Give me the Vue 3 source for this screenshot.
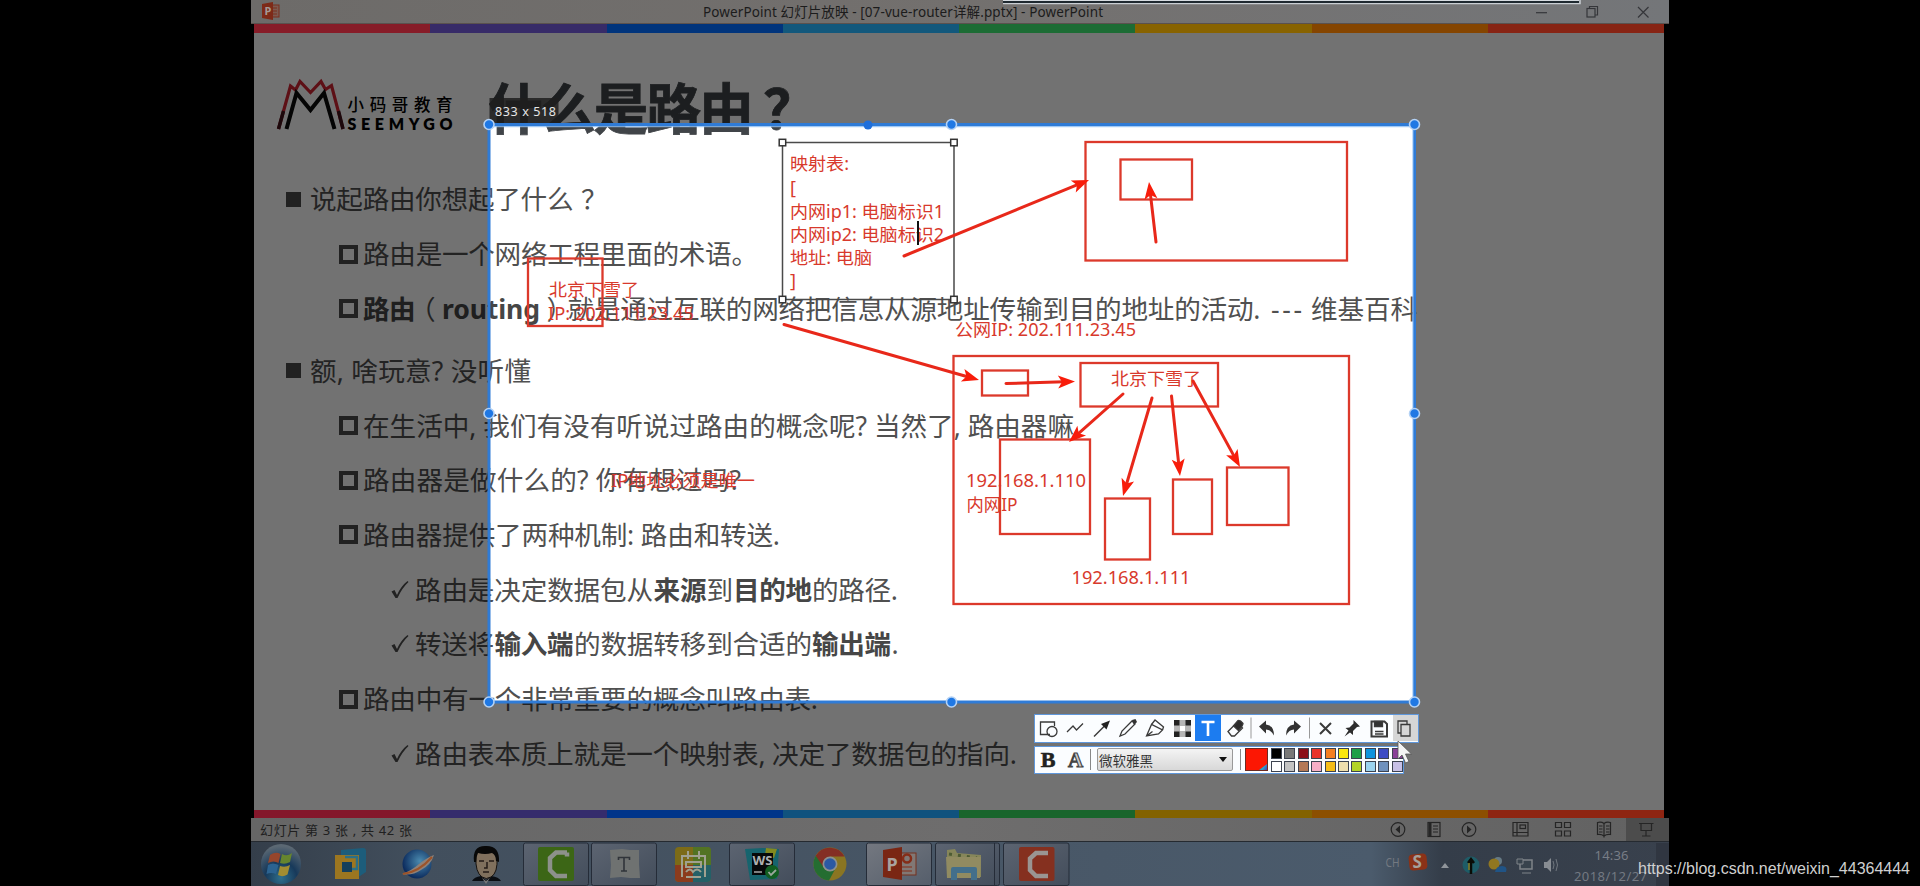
<script setup>
const topStripe = ['#871c28', '#372b68', '#00347c', '#12587c', '#1c6c34', '#886300', '#854500', '#872414']
const bottomStripe = ['#84172b', '#352c6c', '#00358a', '#10527e', '#19652c', '#836200', '#8c4f00', '#8e2512']

const lines = [
  { level: 1, parts: [{ t: '说起路由你想起了什么', x: 310, w: 263.5 }, { t: '？', x: 581, w: 26 }] },
  { level: 2, parts: [{ t: '路由是一个网络工程里面的术语。', x: 363, w: 395 }] },
  {
    level: 2,
    parts: [
      { t: '路由', x: 363, w: 52.5, b: true },
      { t: '（', x: 409, w: 26 },
      { t: 'routing', x: 442, w: 98, b: true },
      { t: '）', x: 546.5, w: 26 },
      { t: '就是通过互联的网络把信息从源地址传输到目的地址的活动.', x: 567.5, w: 693 },
      { t: '---', x: 1271, w: 31 },
      { t: '维基百科', x: 1311, w: 106 }
    ]
  },
  { level: 1, gap: true, parts: [{ t: '额, 啥玩意? 没听懂', x: 310, w: 221 }] },
  { level: 2, parts: [{ t: '在生活中, 我们有没有听说过路由的概念呢? 当然了, 路由器嘛', x: 363, w: 711 }] },
  { level: 2, parts: [{ t: '路由器是做什么的? 你有想过吗?', x: 363, w: 378 }] },
  { level: 2, parts: [{ t: '路由器提供了两种机制: 路由和转送.', x: 363, w: 417 }] },
  {
    level: 3,
    parts: [
      { t: '路由是决定数据包从', x: 415, w: 238 },
      { t: '来源', x: 653.5, w: 53, b: true },
      { t: '到', x: 706.5, w: 26.5 },
      { t: '目的地', x: 733, w: 79, b: true },
      { t: '的路径.', x: 812, w: 86 }
    ]
  },
  {
    level: 3,
    parts: [
      { t: '转送将', x: 415, w: 79 },
      { t: '输入端', x: 494.5, w: 79, b: true },
      { t: '的数据转移到合适的', x: 574, w: 238 },
      { t: '输出端', x: 812, w: 79, b: true },
      { t: '.', x: 891.5, w: 6 }
    ]
  },
  { level: 2, parts: [{ t: '路由中有一个非常重要的概念叫路由表.', x: 363, w: 455 }] },
  { level: 3, parts: [{ t: '路由表本质上就是一个映射表, 决定了数据包的指向.', x: 415, w: 602 }] }
]

const rects = [
  [1085.5, 142, 261.5, 118.5],
  [1120.5, 159.5, 71.5, 40],
  [528, 258.5, 74.5, 67.5],
  [953.5, 356, 395.5, 248],
  [982, 370.5, 46, 25],
  [1080.5, 363, 137.5, 43.5],
  [1000, 439.5, 90, 94.5],
  [1105, 498.5, 45, 61],
  [1173, 479.5, 39, 54.5],
  [1227, 467.5, 61.5, 57.5]
]

const arrows = [
  [904, 256, 1089, 180],
  [1156, 242, 1149, 182],
  [784, 324.5, 979, 380],
  [1006, 383.5, 1075, 381.5],
  [1123, 394, 1069, 442],
  [1152, 398, 1123, 496],
  [1171.5, 396, 1180, 476],
  [1193, 381, 1240, 467]
]
const shaft = ([x1, y1, x2, y2]) => {
  const d = Math.hypot(x2 - x1, y2 - y1)
  const k = (d - 11) / d
  return { x1, y1, x2: x1 + (x2 - x1) * k, y2: y1 + (y2 - y1) * k }
}
const head = ([x1, y1, x2, y2]) =>
  `translate(${x2} ${y2}) rotate(${(Math.atan2(y2 - y1, x2 - x1) * 180) / Math.PI})`

const notes = [
  ['映射表:', 790, 169.5, 59],
  ['[', 790, 194, 6],
  ['内网ip1: 电脑标识1', 790, 217.5, 154],
  ['内网ip2: 电脑标识2', 790, 240.5, 154],
  ['地址: 电脑', 790, 264, 82],
  [']', 790, 287, 6],
  ['北京下雪了', 549, 296, 90],
  ['IP: 202.111.23.45', 548, 320, 146],
  ['IP地址必须是唯一', 611, 486.5, 144],
  ['公网IP: 202.111.23.45', 955, 336, 181],
  ['北京下雪了', 1111, 385, 90],
  ['192.168.1.110', 966, 486.5, 120],
  ['内网IP', 966.5, 511, 51],
  ['192.168.1.111', 1071.5, 584, 119]
]

const handles = [
  [489, 124.5], [951.5, 124.5], [1414.5, 124.5],
  [489, 413.5], [1414.5, 413.5],
  [489, 702], [951.5, 702], [1414.5, 702]
]

const swatches = [
  '#000000', '#787878', '#8b0f18', '#e8332b', '#f57f22', '#fbe80f', '#1f9f48', '#0f93dd', '#3c4bc4', '#8a4098',
  '#ffffff', '#c3c3c3', '#b57956', '#f7aec6', '#f6bd18', '#efdfae', '#b3d428', '#9bd3ee', '#6f91bd', '#c7c0e6'
]
</script>

<template>
  <div class="stage">
    <div class="screen">
      <header class="titlebar">
        <svg class="ppt-small" width="18" height="18" viewBox="0 0 18 18">
          <rect x="8" y="3" width="9" height="12" fill="#7c5a50" stroke="#7a2e1c" />
          <path d="M11 6h4M11 9h4M11 12h4" stroke="#7a2e1c" />
          <path d="M0 2l11-2v18L0 16z" fill="#7d2a18" />
          <text x="2.5" y="13" font-size="11" font-weight="700" fill="#a59a96">P</text>
        </svg>
        <svg class="caption" width="404" height="24">
          <text x="1" y="17" textLength="400">PowerPoint 幻灯片放映 - [07-vue-router详解.pptx] - PowerPoint</text>
        </svg>
        <svg class="controls" width="120" height="24" viewBox="0 0 120 24" fill="none" stroke="#35363a" stroke-width="1.2">
          <path d="M1 12.700h11" />
          <rect x="52" y="8.500" width="8" height="8.500" />
          <path d="M54.500 8.500v-2h8v8.500h-2.500" />
          <path d="M103 7l10.500 10.500M113.500 7L103 17.500" />
        </svg>
      </header>

      <main class="slide">
        <div class="stripe stripe-top">
          <i v-for="c in topStripe" :key="c" :style="{ background: c }"></i>
        </div>
        <section class="body">
          <div class="head">
            <svg class="logo" width="190" height="64" viewBox="270 70 190 64">
              <g fill="none" stroke-linejoin="miter">
                <path d="M279.500 129L291.500 86l5 4 4.500-8.500 10.500 11 10.500-11 4.500 8 6-4L344 129" stroke="#d02433" stroke-width="3.200" />
                <path d="M279.500 129l5-18M344 129l-4.500-18" stroke="#40121a" stroke-width="3.500" />
                <path d="M287.500 129l10-36 14 17 13.500-17 10.500 36" stroke="#0a0a0a" stroke-width="4" />
              </g>
              <text x="348.500" y="110.500" font-size="16.500" font-weight="500" textLength="105">小码哥教育</text>
              <text x="348.500" y="129.500" font-size="16" font-weight="800" textLength="105" class="brand">SEEMYGO</text>
            </svg>
            <svg class="title" width="340" height="75">
              <text x="-1" y="51" textLength="266">什么是路由</text>
              <text x="274" y="51">？</text>
            </svg>
          </div>
          <div class="lines">
            <div v-for="(l, i) in lines" :key="i" class="line" :class="['level' + l.level, { gap: l.gap }]">
              <span v-if="l.level === 1" class="bullet-solid"></span>
              <span v-else-if="l.level === 2" class="bullet-box"></span>
              <svg v-else class="tick" width="20" height="20" viewBox="0 0 20 20">
                <path d="M1.500 11.500l3-1.500 2.500 5Q11 6 17.500 1L18.500 2Q12 8 7.500 18H5.500z" fill="#4c4c4c" />
              </svg>
              <svg class="words" height="54" :width="1130" :viewBox="`${l.parts[0].x} 0 1130 54`">
                <text v-for="p in l.parts" :key="p.x" :x="p.x" y="37" :textLength="p.w" :class="{ strong: p.b }">{{ p.t }}</text>
              </svg>
            </div>
          </div>
          <div class="mask"></div>
        </section>
        <div class="stripe stripe-bottom">
          <i v-for="c in bottomStripe" :key="c" :style="{ background: c }"></i>
        </div>
      </main>

      <footer class="status">
        <svg class="count" width="160" height="24"><text x="0" y="16.500" textLength="152">幻灯片 第 3 张 , 共 42 张</text></svg>
        <svg class="views" width="284" height="25" viewBox="1385 818 284 25" fill="none" stroke="#252525" stroke-width="1.200">
          <rect x="1626" y="818" width="43" height="25" fill="#4c4c4c" stroke="none" />
          <circle cx="1398" cy="829.500" r="6.800" /><path d="M1400 825.500v8l-4.500-4z" fill="#252525" stroke="none" />
          <rect x="1428" y="822.500" width="12" height="14" /><path d="M1430 823v13" stroke-width="3" /><path d="M1433 826h5M1433 829h5M1433 832h5" />
          <circle cx="1469" cy="829.500" r="6.800" /><path d="M1467 825.500v8l4.500-4z" fill="#252525" stroke="none" />
          <path d="M1513 822.500h15v13.500h-15zM1517 822.500v13.500M1513 832.500h15" /><rect x="1520" y="825" width="5.500" height="3.500" />
          <path d="M1555.500 822.500h6v5h-6zM1564.500 822.500h6v5h-6zM1555.500 831h6v5h-6zM1564.500 831h6v5h-6z" />
          <path d="M1597.500 822.500q4-1 6.500 1 2.500-2 6.500-1v12q-4-.5-6.500 1.500-2.500-2-6.500-1.500zM1604 823.500v14" /><path d="M1599 826h3.500M1599 829h3.500M1599 832h3.500M1606 826h3.500M1606 829h3.500M1606 832h3.500" />
          <path d="M1639 823.500h14.500M1641 824v6.500h10.500v-6.500M1646 831v4.500M1642 836h8.500" />
        </svg>
      </footer>

      <nav class="taskbar">
        <svg width="1418" height="44" viewBox="251 842 1418 44">
          <defs>
            <radialGradient id="orb" cx="50%" cy="85%" r="80%"><stop offset="0" stop-color="#2f6f8c" /><stop offset=".5" stop-color="#17395a" /><stop offset="1" stop-color="#5b6873" /></radialGradient>
            <linearGradient id="btn" x1="0" y1="0" x2="1" y2="1"><stop offset="0" stop-color="#5c6471" /><stop offset="1" stop-color="#434d5b" /></linearGradient>
            <linearGradient id="btnOn" x1="0" y1="0" x2="1" y2="1"><stop offset="0" stop-color="#747880" /><stop offset="1" stop-color="#555e6b" /></linearGradient>
            <radialGradient id="ball" cx="60%" cy="40%" r="60%"><stop offset="0" stop-color="#4b8bb0" /><stop offset="1" stop-color="#0c2c5e" /></radialGradient>
          </defs>
          <g stroke="#252c38" fill="url(#btn)">
            <rect x="523.500" y="843" width="65" height="42.500" rx="2" />
            <rect x="591.500" y="843" width="65" height="42.500" rx="2" />
            <rect x="729.500" y="843" width="65" height="42.500" rx="2" />
            <rect x="866.500" y="843" width="65" height="42.500" rx="2" fill="url(#btnOn)" />
            <rect x="935.500" y="843" width="64" height="42.500" rx="2" />
            <path d="M994.500 843v42" />
            <rect x="1003.500" y="843" width="65.500" height="42.500" rx="2" />
          </g>

          <circle cx="281" cy="864" r="20" fill="url(#orb)" />
          <path d="M270 855q6-4 10.500-1l-2 9q-5-3-10.500 0z" fill="#96462c" />
          <path d="M282 854q5 3 10-1l-2 9q-5 3-10 1z" fill="#66852e" />
          <path d="M268 865q5-3 10.500 0l-2.500 9q-5-2-9.500 0z" fill="#2c6390" />
          <path d="M280 866q5 2 10-1l-2.500 9.500q-5 3-9.500.5z" fill="#a38d31" />

          <path d="M341 850l22-2q3 0 3 3v21l-6 4h-19z" fill="#1d5d7b" />
          <path d="M335 855h24v24h-24zM342 862v10h10v-10z" fill="#9c7620" fill-rule="evenodd" />
          <path d="M342 862h10v10h-10z" fill="#153f5b" />
          <path d="M345 857h12v12h-5" fill="none" stroke="#2b7087" stroke-width="2.500" />

          <circle cx="417" cy="864" r="14.500" fill="url(#ball)" />
          <path d="M402 874q9-3 17-10 9-7 15-9-3 10-13 15-9 6-19 4z" fill="#8e8178" /><path d="M403 874q16-2 29-17" stroke="#9c5329" stroke-width="2" fill="none" />

          <path d="M472 881q2-4 9-5l5 4 5-4q8 1 10 5z" fill="#0a0d12" />
          <path d="M476 857q0-9 10-9t11 9q1 16-6 20-5 3-9 0-7-5-6-20z" fill="#80705d" stroke="#16120f" />
          <path d="M474 862q-2-16 11-16 15-1 14 16l-3-1q0-6-4-8-7 2-14 0-2 4-2 9z" fill="#080808" />
          <path d="M479 861h5M489 861h5M487 862v6h-3M483 872h6" stroke="#241b17" stroke-width="1.500" fill="none" />
          <path d="M482 878l4 3 4-3-4 6z" fill="#777" />

          <rect x="538" y="847" width="36" height="34" rx="2" fill="#3c6616" />
          <path d="M567 852.500h-11l-6 5.500v12l6 6h11M567 852.500v4" fill="none" stroke="#8d918b" stroke-width="4.500" />

          <path d="M610 850l12-1 8 1 9 0 0 14 1 14-10 0-9-1-11 1 1-13z" fill="#6f7271" />
          <path d="M618.500 860v-2.500h11v2.500M624 857.500v13.500M621 871h6" fill="none" stroke="#30343a" stroke-width="1.600" />

          <rect x="675" y="847" width="36" height="35" rx="4" fill="#7c6b17" />
          <path d="M693 847h14q4 0 4 4v14h-18z" fill="#527323" /><path d="M693 865h18v13q0 4-4 4h-14z" fill="#246067" /><path d="M675 865h18v17h-14q-4 0-4-4z" fill="#8b3b1c" />
          <g fill="none" stroke="#a0a190" stroke-width="2"><path d="M682 856h23v21M682 855v22M688 851v8M699 851v8M686 862h15v5h-15zM686 872q4-5 7 0 4-5 8 0M686 877h15" /></g>

          <path d="M745 849l18-1 16 1-2 30-27 1z" fill="#16646e" /><path d="M766 848l11 1-3 9-9-3z" fill="#828920" />
          <rect x="752" y="853" width="21" height="22" fill="#07090a" />
          <text x="752.500" y="864.500" font-size="12" font-weight="700" textLength="20" lengthAdjust="spacingAndGlyphs" fill="#aeb1b1">WS</text><path d="M754 872h8" stroke="#a9a9a9" stroke-width="1.500" />
          <circle cx="772" cy="872" r="7" fill="#125e21" /><path d="M768.500 872l2.500 3 5-5" stroke="#9ca89d" stroke-width="1.800" fill="none" />

          <circle cx="830" cy="864" r="16.500" fill="#8a7522" />
          <path d="M830 864L815.700 855.700A16.500 16.500 0 0 0 829 880.500l7-13z" fill="#246d31" />
          <path d="M830 856.500h14.500A16.500 16.500 0 0 0 815.700 855.700l7.500 11z" fill="#842e24" />
          <circle cx="830" cy="864" r="7.500" fill="#8d918f" /><circle cx="830" cy="864" r="5.800" fill="#2b59a3" />

          <rect x="898" y="853" width="18" height="22" fill="#817875" stroke="#74301e" />
          <circle cx="907" cy="858.500" r="4" fill="none" stroke="#852d18" stroke-width="2.500" /><path d="M902 867h10M902 871h10" stroke="#852d18" />
          <path d="M883 850l19-3v33l-19-3z" fill="#7a2613" /><text x="886.500" y="870.500" font-size="18" font-weight="700" fill="#a9a29f">P</text>

          <path d="M947 850l8-1 2 4 24 2v22h-34z" fill="#86865a" /><path d="M949 854l28 4" stroke="#4d5b33" stroke-width="3" stroke-dasharray="3 6" /><path d="M946 857h35l-1 21h-33z" fill="#918b61" />
          <path d="M951 880v-11q0-2 2-2h22q2 0 2 2v11h-6v-7h-14v7z" fill="#436f8b" />

          <rect x="1019" y="847" width="35.500" height="34" rx="2" fill="#85301f" />
          <path d="M1048 853h-12l-6 5.500v11.500l6 6h12" fill="none" stroke="#9a9592" stroke-width="4.500" />

          <text x="1385.500" y="866.500" font-size="13" textLength="14" lengthAdjust="spacingAndGlyphs" fill="#737981">CH</text>
          <rect x="1409" y="854" width="18" height="16" rx="4" fill="#8b3217" transform="rotate(-6 1418 862)" /><text x="1412.500" y="868" font-size="17" font-weight="700" fill="#a5a19b">S</text>
          <path d="M1441 868l4-5 4 5z" fill="#90959b" />
          <circle cx="1471" cy="865" r="8.500" fill="#1e5c67" /><path d="M1471 874v-14M1468 863l3-4 3 4" stroke="#0a0c06" stroke-width="2.500" fill="none" /><path d="M1469 870v-7" stroke="#8a7b20" stroke-width="1.500" />
          <circle cx="1498" cy="861" r="4" fill="#667a84" /><circle cx="1494" cy="864" r="5.500" fill="#907721" /><path d="M1495 872q1-6 7-6t4 6z" fill="#205486" />
          <rect x="1520" y="860" width="12" height="9" fill="#38434d" stroke="#7f8489" stroke-width="1.500" /><path d="M1517 859h6v5h-6zM1522 873h9" stroke="#7f8489" fill="#38434d" />
          <path d="M1544 862h3l4-4v14l-4-4h-3z" fill="#888d93" /><path d="M1553 861q2 4 0 8M1556 859q3 6 0 12" stroke="#71777f" fill="none" />
          <text x="1594.500" y="860" font-size="13" textLength="34" fill="#777d86">14:36</text>
          <text x="1574" y="881" font-size="13" textLength="73" fill="#737982">2018/12/27</text>
          <rect x="1656" y="843" width="13" height="43" fill="#303641" />
        </svg>
      </nav>
    </div>

    <svg class="drawing" width="1920" height="886" viewBox="0 0 1920 886">
      <path d="M1003 3.500h577V0" fill="none" stroke="#c9ced3" stroke-width="1.500" /><path d="M1003 2h576" stroke="#1f2930" stroke-width="2" /><path d="M1003 .5h576" stroke="#d6dbe0" />

      <rect x="489.500" y="98" width="69" height="25" fill="#1f1f1f" fill-opacity=".85" />
      <text x="495" y="115.500" font-size="12.500" fill="#e6e6e6" textLength="61">833 x 518</text>

      <rect x="489" y="124.500" width="925.500" height="577.500" fill="none" stroke="#2f7bd6" stroke-width="3" />
      <path d="M491 126.700H1413V700" fill="none" stroke="#8dbdf2" stroke-width="1" />
      <circle cx="868" cy="125" r="4.500" fill="#1f6fdb" />

      <g fill="none" stroke="#4a4a4a" stroke-width="1.500">
        <path d="M782.500 142.500H954V299.500H782.500z" />
        <g fill="#fff" stroke="#333"><rect x="779.200" y="139.300" width="6.500" height="6.500" /><rect x="950.700" y="139.300" width="6.500" height="6.500" /><rect x="779.200" y="296.300" width="6.500" height="6.500" /><rect x="950.700" y="296.300" width="6.500" height="6.500" /></g>
      </g>

      <g fill="none" stroke="#dc392b" stroke-width="2.300">
        <rect v-for="(r, i) in rects" :key="i" :x="r[0]" :y="r[1]" :width="r[2]" :height="r[3]" />
      </g>
      <g class="notes">
        <text v-for="(n, i) in notes" :key="i" :x="n[1]" :y="n[2]" :textLength="n[3]" lengthAdjust="spacingAndGlyphs">{{ n[0] }}</text>
      </g>
      <g v-for="(a, i) in arrows" :key="'a' + i">
        <line v-bind="shaft(a)" stroke="#e8281a" stroke-width="3" stroke-linecap="round" />
        <path d="M0 0L-17-6.500-13 0-17 6.500z" fill="#f81c0a" :transform="head(a)" />
      </g>
      <path d="M918 221v24" stroke="#111" stroke-width="2" />

      <circle v-for="(h, i) in handles" :key="'h' + i" :cx="h[0]" :cy="h[1]" r="5" fill="#1f78e4" stroke="#b4d2f5" stroke-width="1.600" />
    </svg>

    <div class="tools">
      <div class="bar bar-main">
        <svg width="384" height="26" viewBox="1035 714.500 384 26" fill="none" stroke="#3a3a3a" stroke-width="1.300">
          <rect x="1195" y="714" width="26" height="27" fill="#1c7cf0" stroke="none" />
          <rect x="1393" y="714" width="25" height="27" fill="#d6d6d6" stroke="none" />
          <path d="M1050 734h-9.500v-12.500h14v4" /><circle cx="1052" cy="731" r="5" />
          <path d="M1067 731.500l6-6 3.500 4 6.500-6.500" />
          <path d="M1094 736l12-12" stroke-width="1.500" /><path d="M1110 720l-3.500 9-5.500-5.500z" fill="#222" stroke="none" />
          <path d="M1120 735.500l2-5 10-10 3 3-10 10z" /><path d="M1132 719.500l3.500-1 1.500 3-3 3z" fill="#333" stroke="none" />
          <path d="M1146.500 735.500l5-11.500 11 5.500-4 4zM1151.500 724l3.500-4.500 8.500 7-1 3M1146.500 735.500l6-4.500" />
          <g stroke="none"><path d="M1174 719.500h17v17h-17z" fill="#b5b5b5" /><path d="M1174 719.500h5.500v5.500h-5.500zM1185.500 719.500h5.500v5.500h-5.500zM1174 731h5.500v5.500h-5.500zM1185.500 731h5.500v5.500h-5.500z" fill="#222" /><path d="M1180 725.500h5v5h-5z" fill="#fff" /></g>
          <path d="M1201.500 721.500h13M1208 721v14.500" stroke="#fff" stroke-width="2.600" />
          <path d="M1228 731l9-9 5.500 5.500-8 8h-3z" /><path d="M1233.500 725.500l4.500-5.500q2-1 5 3 0 2-4.500 7z" fill="#2b2b2b" />
          <path d="M1251 717v21M1309.500 717v21" stroke="#999" stroke-width="1" />
          <path d="M1259 726l7-6v4q8 1 8 11-3-6-8-6v4z" fill="#333" stroke="none" />
          <path d="M1301 726l-7-6v4q-8 1-8 11 3-6 8-6v4z" fill="#333" stroke="none" />
          <path d="M1320 722.500l11 11M1331 722.500l-11 11" stroke-width="2" />
          <path d="M1353.500 719.500l6.500 6.500-3 .5-4 4 0 4-3-2.500-5.500 4 4-6-3-2.500 4-.5 4-4z" fill="#2d2d2d" stroke="none" />
          <path d="M1371.500 721h13l2.500 2.500v12.500h-15.500z" stroke-width="2" /><path d="M1374.500 721h8v5h-8z" fill="#333" /><path d="M1375 731h8.500M1375 733.500h8.500" />
          <path d="M1401 724h9v11.500h-9zM1401 732.500h-3v-12h9v3.500" />
        </svg>
      </div>
      <div class="bar bar-text">
        <span class="bold">B</span>
        <span class="outline">A</span>
        <i class="sep"></i>
        <div class="select"><span>微软雅黑</span><b></b></div>
        <i class="sep"></i>
        <div class="current"><i></i></div>
        <div class="palette"><i v-for="c in swatches" :key="c" :style="{ background: c }"></i></div>
      </div>
    </div>

    <svg class="pointer" width="16" height="25" viewBox="0 0 16 25"><path d="M1 1v18l4-4 3.500 8 3.500-1.500-3.500-7.500h6z" fill="#f4f4f4" stroke="#555" stroke-width=".8" /></svg>
    <svg class="watermark" width="276" height="26"><text x="0" y="18" textLength="272" lengthAdjust="spacingAndGlyphs">https://blog.csdn.net/weixin_44364444</text></svg>
  </div>
</template>

<style>
body { background: #000; }
</style>

<style scoped>
.stage { position: relative; width: 1920px; height: 886px; overflow: hidden; background: #000; font-family: "Noto Sans", "Noto Sans CJK SC", sans-serif; }
svg { display: block; flex: none; }
.screen { width: 1418px; height: 886px; margin-left: 251px; display: flex; flex-direction: column; }
.titlebar { height: 24px; display: flex; align-items: center; background: linear-gradient(90deg, #6d6b69, #73706e 50%, #747679); box-sizing: border-box; border-bottom: 1px solid #5a514e; }
.ppt-small { margin-left: 11px; margin-top: -2px; }
.caption { margin-left: 422px; font-size: 13.500px; fill: #1c1c1c; }
.controls { margin-left: 429px; }
.slide { height: 794px; margin: 0 5px 0 3px; display: flex; flex-direction: column; }
.stripe { display: flex; }
.stripe i { flex: 1; }
.stripe-top { height: 9px; }
.stripe-bottom { height: 8px; }
.body { position: relative; height: 777px; overflow: hidden; background: #fff; }
.head { height: 139px; display: flex; }
.logo { margin: 37px 0 0 15px; }
.title { margin: 45px 0 0 30px; overflow: visible; font-size: 55px; font-weight: 700; fill: #404448; stroke: #404448; stroke-width: .8px; font-family: "Noto Sans CJK SC", sans-serif; }
.brand { font-family: Lato, "Open Sans", sans-serif; }
.line { height: 54.700px; display: flex; align-items: center; }
.gap { margin-top: 7.500px; }
.level1 { padding-left: 32px; }
.level2 { padding-left: 84.500px; }
.level3 { padding-left: 136px; }
.bullet-solid { width: 15px; height: 15px; margin-right: 9px; background: #4b4b4b; flex: none; }
.bullet-box { width: 19px; height: 19px; margin: 0 5.500px 0 0; box-sizing: border-box; border: 4px solid #4b4b4b; flex: none; }
.tick { margin-right: 5px; }
.words { font-size: 26.600px; fill: #505050; overflow: visible; }
.strong { font-weight: 700; fill: #464646; }
.mask { position: absolute; left: 235px; top: 91.500px; width: 925.500px; height: 577.500px; box-shadow: 0 0 0 1500px rgba(0, 0, 0, .553); }
.status { height: 24px; display: flex; justify-content: space-between; background: linear-gradient(90deg, #666, #6e6d6d 50%, #626262); border-bottom: 1px solid #252a30; box-sizing: border-box; overflow: hidden; }
.count { margin-left: 9px; font-size: 13px; fill: #202020; }
.taskbar { height: 44px; background: linear-gradient(90deg, #343e4a, #424f5d 12%, #495868 60%, #4b5b6c 79%, #343d49 84%, #39414d); }

.drawing { position: absolute; left: 0; top: 0; }
.notes { font-size: 17.500px; fill: #d8392c; }

.tools { position: absolute; left: 1034px; top: 713.500px; display: flex; flex-direction: column; align-items: flex-start; gap: 3px; }
.bar { border: 1px solid #5f97db; background: #fbfdff; box-sizing: border-box; display: flex; align-items: center; }
.bar-main { width: 385px; height: 29px; }
.bar-text { width: 370px; height: 28px; }
.bold { width: 26px; text-align: center; font: 700 22px/26px "Liberation Serif", serif; color: #222; -webkit-text-stroke: .6px #222; }
.outline { width: 29px; text-align: center; font: 700 21px/26px "Liberation Serif", serif; color: #ccc; -webkit-text-stroke: 1.100px #444; }
.sep { width: 1px; height: 21px; background: #888; flex: none; }
.select { width: 136px; height: 23px; box-sizing: border-box; margin: 0 7px 0 6px; padding: 0 5px 0 1px; border: 1px solid #999; border-radius: 2px; background: linear-gradient(#f4f4f4, #d8d8d8); display: flex; align-items: center; justify-content: space-between; font: 13.500px/20px "Noto Sans CJK SC", sans-serif; color: #333; }
.select b { border: 4.500px solid transparent; border-top: 5px solid #111; border-bottom: 0; }
.current { width: 23px; height: 23px; box-sizing: border-box; margin: 0 3px 0 4px; border: 1px solid #6b2a22; background: #fc1703; display: flex; align-items: flex-end; justify-content: flex-end; }
.current i { width: 8px; height: 6px; background: linear-gradient(120deg, #1d8a52, #25a7d8 55%, #5536a0); clip-path: polygon(100% 0, 100% 100%, 0 100%); }
.palette { display: grid; grid-template-columns: repeat(10, 11px); grid-template-rows: repeat(2, 11px); gap: 2px 2.400px; }
.palette i { border: 1px solid #3d4350; box-sizing: border-box; }
.pointer { position: absolute; left: 1397px; top: 740px; }
.watermark { position: absolute; left: 1638px; top: 855.500px; font-family: "Liberation Sans", Arial, sans-serif; font-size: 16px; fill: #d0d0d0; }
</style>
